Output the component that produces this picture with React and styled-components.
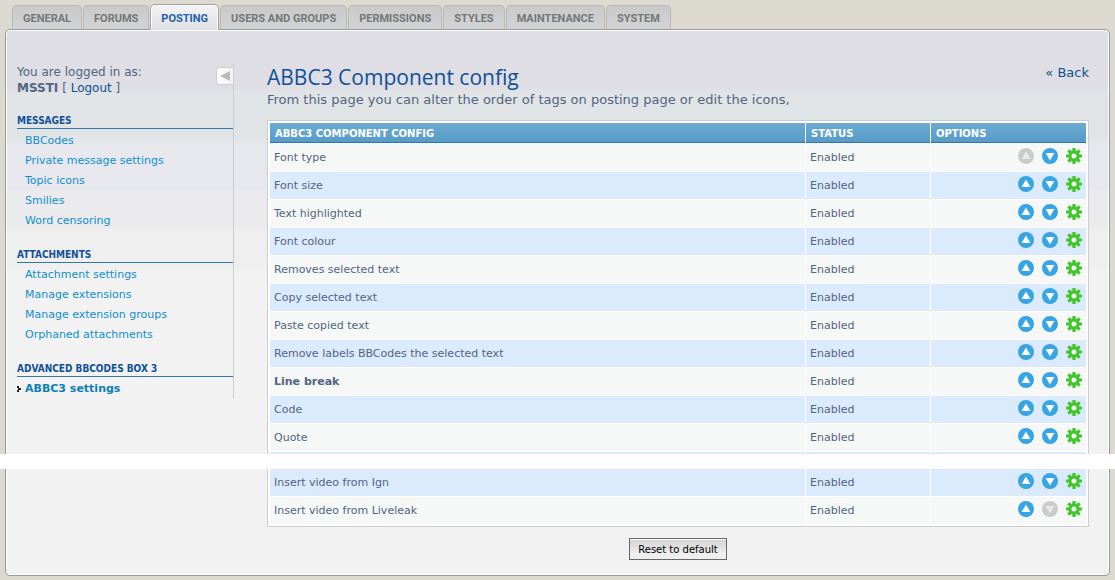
import React from "react";
import styled, { createGlobalStyle } from "styled-components";

const verdana = `Verdana, "DejaVu Sans", sans-serif`;

const GlobalStyle = createGlobalStyle`
  * { box-sizing: border-box; }
  body {
    margin: 0;
    background: #dcd9d1;
    color: #536482;
    font-family: ${verdana};
    font-size: 11px;
    line-height: 16px;
  }
  a { text-decoration: none; }
  h1, h2, p, ul { margin: 0; padding: 0; }
  ul { list-style: none; }
`;

const Page = styled.div`
  position: relative;
  padding: 4px 5px;
`;

const Tabs = styled.ul`
  display: flex;
  align-items: flex-end;
  gap: 1px;
  height: 26px;
  margin-bottom: -1px;
  padding-left: 7px;
`;

const TabItem = styled.li`
  position: relative;
  height: ${(p) => (p.$active ? 26 : 25)}px;
  display: flex;
`;

const TabLink = styled.a`
  padding: ${(p) => (p.$active ? 6 : 5)}px 10px 0;
  border: 1px solid ${(p) => (p.$active ? "#a3a39f" : "#b9b8b3")};
  border-bottom: ${(p) => (p.$active ? "0" : "1px solid #999")};
  border-radius: 5px 5px 0 0;
  background: ${(p) => (p.$active ? "linear-gradient(#f4f4f6, #dedee4)" : "linear-gradient(#c9c9c9, #d1d3d6)")};
  box-shadow: ${(p) => (p.$active ? "inset 1px 1px 0 #fff, inset -1px 0 0 #fff" : "none")};
  color: ${(p) => (p.$active ? "#1f62a5" : "#767676")};
  font: bold 11px/16px Roboto, sans-serif;
  white-space: nowrap;
`;

const Panel = styled.div`
  display: flex;
  align-items: flex-start;
  gap: 33px;
  padding: 34px 20px 15px 11px;
  border: 1px solid #999;
  border-radius: 5px;
  box-shadow: inset 0 0 0 1px #fff;
  background: linear-gradient(
    #dedee4 0, #dedee4 58px, #e0e4e6 62px, #e0e4e6 104px, #e7e8ed 116px,
    #e7e8ed 159px, #ebebed 162px, #ebebed 196px, #efefef 204px,
    #efefef 238px, #f2f2f2 244px
  );
`;

const Sidebar = styled.nav`
  flex: 0 0 217px;
  border-right: 1px solid #ccc;
`;

const Account = styled.div`
  display: flex;
  justify-content: space-between;
  height: 48px;
`;

const AccountText = styled.p`
  font-size: 12px;
  white-space: nowrap;
`;

const AccountLink = styled.a`
  color: #105289;
`;

const Toggle = styled.button`
  width: 17px;
  height: 18px;
  margin-top: 3px;
  padding: 0;
  border: 1px solid #cfcfd2;
  border-right: 0;
  border-radius: 4px 0 0 4px;
  background: linear-gradient(90deg, #fff, #f2f2f4);
  svg { display: block; margin: 0 auto; }
`;

const Section = styled.section`
  margin-bottom: ${(p) => (p.$last ? 0 : 16)}px;
  ul { padding-top: 1px; }
`;

const SectionTitle = styled.h2`
  height: 17px;
  padding-top: 1px;
  border-bottom: 1px solid #327aa5;
  color: #115098;
  font: bold 10px/16px "DejaVu Sans Condensed", "DejaVu Sans", sans-serif;
  text-transform: uppercase;
`;

const MenuLink = styled.a`
  display: flex;
  align-items: center;
  height: 20px;
  padding-left: ${(p) => (p.$active ? 0 : 8)}px;
  padding-top: 2px;
  color: ${(p) => (p.$active ? "#0d7fb8" : "#0f8fcf")};
  font-weight: ${(p) => (p.$active ? "bold" : "normal")};
  svg { flex: none; margin-right: 4px; }
`;

const Main = styled.main`
  flex: 1;
  min-width: 0;
`;

const TitleRow = styled.div`
  display: flex;
  justify-content: space-between;
  align-items: flex-start;
  margin-bottom: 2px;
`;

const Title = styled.h1`
  color: #115098;
  font: normal 21px/26px "Open Sans", sans-serif;
`;

const Back = styled.a`
  padding-top: 1px;
  color: #105289;
  font-size: 13px;
`;

const Intro = styled.p`
  font-size: 13px;
  margin-bottom: 12px;
`;

const Table = styled.table`
  width: 100%;
  table-layout: fixed;
  border: 1px solid #ccccd2;
  border-spacing: 1px;
  padding: 1px;
  background: #fff;
`;

const Col = styled.col`
  width: ${(p) => p.$width};
`;

const HeadCell = styled.th`
  height: 20px;
  padding: 2px 4px 0 5px;
  border-bottom: 1px solid #2e79a8;
  background: linear-gradient(#6cacd3, #579bc6);
  color: #fff;
  font: bold 10px/16px ${verdana};
  text-align: left;
  text-transform: uppercase;
`;

const Row = styled.tr`
  background: ${(p) => (p.$alt ? "#dceafe" : "#f6f8f7")};
`;

const Cell = styled.td`
  height: 27px;
  padding: 0 4px;
  font-weight: ${(p) => (p.$bold ? "bold" : "normal")};
`;

const GapCell = styled.td`
  height: 16px;
  padding: 2px 0 0;
  vertical-align: top;
`;

const GapBand = styled.div`
  position: absolute;
  left: 0;
  right: 0;
  height: 15px;
  background: #fff;
`;

const Actions = styled.div`
  display: flex;
  justify-content: flex-end;
  gap: 8px;
  margin-bottom: 4px;
  a, svg { display: block; }
`;

const FormFooter = styled.div`
  display: flex;
  justify-content: center;
  padding-top: 11px;
`;

const ResetButton = styled.button`
  height: 22px;
  padding: 1px 8px 0;
  border: 1px solid #666;
  border-radius: 0;
  background: linear-gradient(#d2d2d2, #efefef 75%);
  box-shadow: inset 0 1px 0 #fff;
  color: #000;
  font: 10px/16px ${verdana};
`;

const Arrow = ({ down, disabled }) => (
  <svg width="16" height="16" viewBox="0 0 16 16" aria-hidden="true">
    <circle cx="8" cy="8" r="8" fill={disabled ? "#cbcbcb" : "#37a4e4"} />
    <path
      d={down ? "M3.6 4.9h8.8L8 12.6z" : "M3.6 11.1h8.8L8 3.4z"}
      fill={disabled ? "#e9e9e9" : "#fff"}
    />
  </svg>
);

const Gear = () => (
  <svg width="16" height="16" viewBox="0 0 16 16" aria-hidden="true">
    <g fill="#41c52b">
      {[0, 45, 90, 135].map((a) => (
        <rect key={a} x="6.4" y="0" width="3.2" height="16" rx="0.5" transform={`rotate(${a} 8 8)`} />
      ))}
      <circle cx="8" cy="8" r="5.7" />
    </g>
    <circle cx="8" cy="8" r="2.5" fill="#f4faf3" />
  </svg>
);

const tabs = ["GENERAL", "FORUMS", "POSTING", "USERS AND GROUPS", "PERMISSIONS", "STYLES", "MAINTENANCE", "SYSTEM"];

const menu = [
  { title: "Messages", items: ["BBCodes", "Private message settings", "Topic icons", "Smilies", "Word censoring"] },
  { title: "Attachments", items: ["Attachment settings", "Manage extensions", "Manage extension groups", "Orphaned attachments"] },
  { title: "Advanced BBCodes Box 3", items: ["ABBC3 settings"] },
];

const firstRows = [
  "Font type", "Font size", "Text highlighted", "Font colour", "Removes selected text",
  "Copy selected text", "Paste copied text", "Remove labels BBCodes the selected text",
  "Line break", "Code", "Quote",
];
const lastRows = ["Insert video from Ign", "Insert video from Liveleak"];

const TagRow = ({ name, alt, first, last }) => (
  <Row $alt={alt}>
    <Cell $bold={name === "Line break"}>{name}</Cell>
    <Cell>Enabled</Cell>
    <Cell>
      <Actions>
        {first ? <Arrow disabled /> : <a href="#up" aria-label={`Move ${name} up`}><Arrow /></a>}
        {last ? <Arrow down disabled /> : <a href="#down" aria-label={`Move ${name} down`}><Arrow down /></a>}
        <a href="#edit" aria-label={`Edit ${name}`}><Gear /></a>
      </Actions>
    </Cell>
  </Row>
);

export default function App() {
  return (
    <Page>
      <GlobalStyle />
      <Tabs>
        {tabs.map((t) => (
          <TabItem key={t} $active={t === "POSTING"}>
            <TabLink href="#tab" $active={t === "POSTING"}>{t}</TabLink>
          </TabItem>
        ))}
      </Tabs>
      <Panel>
        <Sidebar>
          <Account>
            <AccountText>
              You are logged in as:<br />
              <strong>MSSTI</strong> [ <AccountLink href="#logout">Logout</AccountLink> ]
            </AccountText>
            <Toggle type="button" aria-label="Hide menu">
              <svg width="10" height="10" viewBox="0 0 10 10"><path d="M10 0v10L0 5z" fill="#b9b9bb" /></svg>
            </Toggle>
          </Account>
          {menu.map((s, i) => (
            <Section key={s.title} $last={i === menu.length - 1}>
              <SectionTitle>{s.title}</SectionTitle>
              <ul>
                {s.items.map((item) => {
                  const active = item === "ABBC3 settings";
                  return (
                    <li key={item}>
                      <MenuLink href="#menu" $active={active}>
                        {active && (
                          <svg width="4" height="6" viewBox="0 0 4 6"><path d="M0 0h2v2h2v2H2v2H0V4h1V2H0z" fill="#222" /></svg>
                        )}
                        {item}
                      </MenuLink>
                    </li>
                  );
                })}
              </ul>
            </Section>
          ))}
        </Sidebar>
        <Main>
          <TitleRow>
            <Title>ABBC3 Component config</Title>
            <Back href="#back">« Back</Back>
          </TitleRow>
          <Intro>From this page you can alter the order of tags on posting page or edit the icons,</Intro>
          <Table>
            <colgroup>
              <Col $width="auto" />
              <Col $width="124px" />
              <Col $width="155px" />
            </colgroup>
            <thead>
              <tr>
                <HeadCell scope="col">ABBC3 Component config</HeadCell>
                <HeadCell scope="col">Status</HeadCell>
                <HeadCell scope="col">Options</HeadCell>
              </tr>
            </thead>
            <tbody>
              {firstRows.map((name, i) => (
                <TagRow key={name} name={name} alt={i % 2 === 1} first={i === 0} />
              ))}
              <Row $alt aria-hidden="true">
                <GapCell><GapBand /></GapCell>
                <GapCell />
                <GapCell />
              </Row>
              {lastRows.map((name, i) => (
                <TagRow key={name} name={name} alt={i === 0} last={i === 1} />
              ))}
            </tbody>
          </Table>
          <FormFooter>
            <ResetButton type="button">Reset to default</ResetButton>
          </FormFooter>
        </Main>
      </Panel>
    </Page>
  );
}
